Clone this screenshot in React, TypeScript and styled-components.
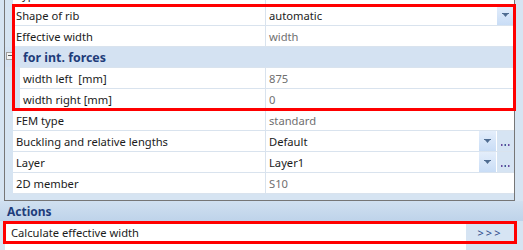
import * as React from 'react';
import styled, { createGlobalStyle } from 'styled-components';

const GlobalStyle = createGlobalStyle`
  html, body {
    margin: 0;
    padding: 0;
    background-color: #d6e4f2;
  }
  body {
    font-family: 'Noto Sans', 'Open Sans', sans-serif;
    font-size: 11.2px;
    color: #1b1b1b;
  }
`;

const Page = styled.div`
  position: relative;
  width: 523px;
  height: 250px;
  overflow: hidden;
  background-color: #d6e4f2;
`;

const Grid = styled.div`
  margin: -16px 0 0 4px;
  width: 509px;
  padding-bottom: 6px;
  border: 1px solid #767676;
  border-top: none;
  background-color: #d6e4f2;
`;

const Row = styled.div`
  display: flex;
  height: 21px;
`;

const Indent = styled.div<{ $width: number }>`
  width: ${(p) => p.$width}px;
  flex: none;
`;

const Label = styled.div<{ $width: number }>`
  display: flex;
  align-items: center;
  width: ${(p) => p.$width}px;
  flex: none;
  box-sizing: border-box;
  padding-left: 3px;
  background-color: #ffffff;
  border-bottom: 1px solid #d9e3ee;
  border-right: 1px solid #d9e3ee;
  white-space: pre;
`;

const Value = styled.div<{ $muted?: boolean }>`
  display: flex;
  align-items: center;
  flex: 1;
  min-width: 0;
  box-sizing: border-box;
  padding-left: 3px;
  background-color: #ffffff;
  border-bottom: 1px solid #d9e3ee;
  color: ${(p) => (p.$muted ? '#6f6f6f' : '#1b1b1b')};
  white-space: nowrap;
`;

const ValueText = styled.span`
  flex: 1;
`;

const Buttons = styled.div`
  display: flex;
  align-self: stretch;
  gap: 1px;
`;

const DropButton = styled.div`
  display: flex;
  align-items: center;
  justify-content: center;
  width: 17px;
  background: linear-gradient(#e4eefb, #c9ddf6);
`;

const DotsButton = styled.div`
  display: flex;
  align-items: center;
  justify-content: center;
  width: 17px;
  background-color: #d6e4f3;
`;

const GroupRow = styled.div`
  display: flex;
  align-items: center;
  height: 21px;
  background-color: #d4e2f2;
  border-bottom: 1px solid #d9e3ee;
  box-sizing: border-box;
`;

const Toggle = styled.div`
  position: relative;
  width: 6px;
  height: 6px;
  margin: -2px 0 0 1px;
  border: 1px solid #a0a0a0;
  background-color: #f4f4f4;
  flex: none;

  &::after {
    content: '';
    position: absolute;
    left: 1px;
    right: 1px;
    top: 2px;
    height: 1px;
    background-color: #555555;
  }
`;

const GroupTitle = styled.span`
  margin-left: 9px;
  font-size: 12.4px;
  font-weight: 700;
  color: #1e3c7a;
`;

const ActionsHeader = styled.div`
  display: flex;
  align-items: center;
  height: 20px;
  padding-left: 7px;
  font-size: 12px;
  font-weight: 700;
  color: #1e3d7c;
  background: linear-gradient(#d0e0f0, #bed3ea);
`;

const ActionRow = styled.div`
  display: flex;
  height: 22px;
  margin-left: 5px;
  width: 509px;
  border-bottom: 1px solid #e6ecf3;
`;

const ActionLabel = styled.div`
  display: flex;
  align-items: center;
  flex: 1;
  padding-left: 6px;
  background-color: #ffffff;
  white-space: nowrap;
`;

const ActionButton = styled.div`
  display: flex;
  align-items: center;
  justify-content: center;
  width: 48px;
  background-color: #d6e4f3;
  color: #2c4a8a;
  font-size: 11px;
  letter-spacing: 2px;
`;

const Marker = styled.div<{ $left: number; $top: number; $width: number; $height: number }>`
  position: absolute;
  left: ${(p) => p.$left}px;
  top: ${(p) => p.$top}px;
  width: ${(p) => p.$width}px;
  height: ${(p) => p.$height}px;
  box-sizing: border-box;
  border: 3px solid #ff0000;
  pointer-events: none;
`;

const Arrow = () => (
  <svg width="7" height="5" viewBox="0 0 7 5">
    <rect x="0" y="0" width="7" height="1" fill="#4f6c91" />
    <path d="M1 1H6L3.5 4Z" fill="#4f6c91" />
  </svg>
);

const Dots = () => (
  <svg width="9" height="12" viewBox="0 0 9 12">
    <rect x="0" y="9" width="1.5" height="2" fill="#6a4aa0" />
    <rect x="3.5" y="9" width="1.5" height="2" fill="#3d5a96" />
    <rect x="7" y="9" width="1.5" height="2" fill="#6a4aa0" />
  </svg>
);

interface PropRowProps {
  label: string;
  value?: string;
  muted?: boolean;
  sub?: boolean;
  drop?: boolean;
  dots?: boolean;
}

const PropRow: React.FC<PropRowProps> = ({ label, value, muted, sub, drop, dots }) => (
  <Row>
    <Indent $width={sub ? 15 : 8} />
    <Label $width={sub ? 246 : 253}>{label}</Label>
    <Value $muted={muted}>
      <ValueText>{value}</ValueText>
      {(drop || dots) && (
        <Buttons>
          {drop && (
            <DropButton>
              <Arrow />
            </DropButton>
          )}
          {dots && (
            <DotsButton>
              <Dots />
            </DotsButton>
          )}
        </Buttons>
      )}
    </Value>
  </Row>
);

const App: React.FC = () => {
  return (
    <Page>
      <GlobalStyle />
      <Grid>
        <PropRow label="Type" value="" />
        <PropRow label="Shape of rib" value="automatic" drop />
        <PropRow label="Effective width" value="width" muted />
        <GroupRow>
          <Toggle />
          <GroupTitle>for int. forces</GroupTitle>
        </GroupRow>
        <PropRow label="width left  [mm]" value="875" muted sub />
        <PropRow label="width right [mm]" value="0" muted sub />
        <PropRow label="FEM type" value="standard" muted />
        <PropRow label="Buckling and relative lengths" value="Default" drop dots />
        <PropRow label="Layer" value="Layer1" drop dots />
        <PropRow label="2D member" value="S10" muted />
      </Grid>
      <ActionsHeader>Actions</ActionsHeader>
      <ActionRow>
        <ActionLabel>Calculate effective width</ActionLabel>
        <ActionButton>&gt;&gt;&gt;</ActionButton>
      </ActionRow>
      <ActionRow>
        <ActionLabel />
        <ActionButton />
      </ActionRow>
      <Marker $left={12} $top={4} $width={504} $height={107} />
      <Marker $left={3} $top={221} $width={514} $height={23} />
    </Page>
  );
};

export default App;
